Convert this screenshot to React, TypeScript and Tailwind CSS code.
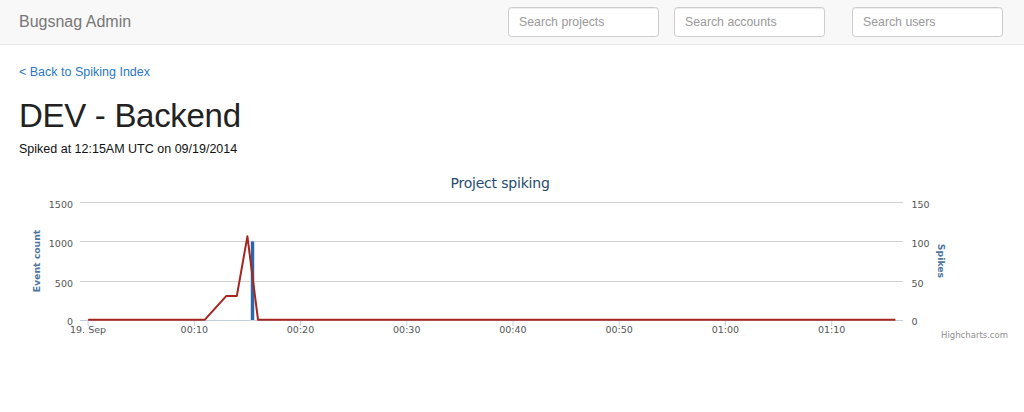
import React from "react";

const chartFont = "'DejaVu Sans', Verdana, sans-serif";

// minutes -> x on the plot
const tx = (t: number) => 194.3 + (t - 10) * 10.623;
// event count -> y on the plot
const vy = (v: number) => 319.7 - v * 0.0787;

const events: [number, number][] = [
  [0, 0],
  [11, 0],
  [12, 150],
  [13, 300],
  [14, 300],
  [15, 1060],
  [16, 0],
  [76, 0],
];

const gridRows = [
  { y: 202.5, left: "1500", right: "150" },
  { y: 241.5, left: "1000", right: "100" },
  { y: 281.5, left: "500", right: "50" },
];

const xTicks = [
  { t: 0, label: "19. Sep" },
  { t: 10, label: "00:10" },
  { t: 20, label: "00:20" },
  { t: 30, label: "00:30" },
  { t: 40, label: "00:40" },
  { t: 50, label: "00:50" },
  { t: 60, label: "01:00" },
  { t: 70, label: "01:10" },
];

function SpikeChart() {
  const points = events.map(([t, v]) => `${tx(t).toFixed(1)},${vy(v).toFixed(1)}`).join(" ");

  return (
    <svg width="1024" height="185" viewBox="0 165 1024 185" className="block" style={{ fontFamily: chartFont }}>
      <text x="500" y="188" textAnchor="middle" fontSize="14" letterSpacing="-0.2" fill="#274b6d">
        Project spiking
      </text>

      {gridRows.map((row) => (
        <g key={row.left}>
          <line x1="80" x2="903" y1={row.y} y2={row.y} stroke="#d0d0d0" strokeWidth="1" />
          <text x="73" y={row.y + 5} textAnchor="end" fontSize="9.5" fill="#555">
            {row.left}
          </text>
          <text x="911.5" y={row.y + 5} fontSize="9.5" fill="#555">
            {row.right}
          </text>
        </g>
      ))}
      <text x="73" y="324.5" textAnchor="end" fontSize="9.5" fill="#555">
        0
      </text>
      <text x="911.5" y="324.5" fontSize="9.5" fill="#555">
        0
      </text>

      {/* x axis */}
      <line x1="80" x2="903" y1="320.5" y2="320.5" stroke="#c0d0e0" strokeWidth="1" />
      {xTicks.map((tick) => (
        <g key={tick.label}>
          <line x1={tx(tick.t)} x2={tx(tick.t)} y1="321" y2="326" stroke="#c0d0e0" strokeWidth="1" />
          <text x={tx(tick.t)} y="332.5" textAnchor="middle" fontSize="9.5" fill="#555">
            {tick.label}
          </text>
        </g>
      ))}

      {/* axis titles */}
      <text
        x="40"
        y="261"
        transform="rotate(-90 40 261)"
        textAnchor="middle"
        fontSize="9.3"
        fontWeight="bold"
        fill="#4d759e"
      >
        Event count
      </text>
      <text
        x="937.5"
        y="261"
        transform="rotate(90 937.5 261)"
        textAnchor="middle"
        fontSize="9.3"
        fontWeight="bold"
        fill="#4d759e"
      >
        Spikes
      </text>

      {/* spikes column */}
      <rect x="250.5" y="241" width="4" height="79.5" fill="#2c66ad" stroke="#dce6f2" strokeWidth="0.8" />

      {/* event count line */}
      <polyline points={points} fill="none" stroke="#a6261f" strokeWidth="2" strokeLinejoin="round" />

      <text x="1008" y="338" textAnchor="end" fontSize="8.5" fill="#909090">
        Highcharts.com
      </text>
    </svg>
  );
}

function SearchBox({ placeholder }: { placeholder: string }) {
  return (
    <input
      type="text"
      placeholder={placeholder}
      className="h-[30px] w-[151px] rounded-[3.5px] border border-[#cccccc] bg-white px-[10px] text-[12.3px] text-[#555] shadow-[inset_0_1px_1px_rgba(0,0,0,0.075)] outline-none placeholder:text-[#999]"
    />
  );
}

export default function App() {
  return (
    <div className="min-h-[412px] bg-white font-['Liberation_Sans',Arial,sans-serif] text-[#222]">
      <nav className="flex h-[45px] items-center border-b border-[#e7e7e7] bg-[#f8f8f8] pr-[21px] pl-[19px]">
        <span className="text-[16px] leading-[20px] text-[#777]">Bugsnag Admin</span>
        <div className="ml-auto flex items-center">
          <div className="flex gap-[15px]">
            <SearchBox placeholder="Search projects" />
            <SearchBox placeholder="Search accounts" />
          </div>
          <div className="ml-[27px]">
            <SearchBox placeholder="Search users" />
          </div>
        </div>
      </nav>

      <main>
        <div className="px-[19px] pt-[18px]">
          <a href="#" className="block text-[12.5px] leading-[18px] text-[#2b78c5]">
            &lt; Back to Spiking Index
          </a>
          <h1 className="mt-[17px] text-[33px] leading-[36px] tracking-[-0.3px] text-[#222]">DEV - Backend</h1>
          <p className="mt-[6px] text-[12.5px] leading-[18px] text-[#111]">Spiked at 12:15AM UTC on 09/19/2014</p>
        </div>
        <div className="mt-[7px]">
          <SpikeChart />
        </div>
      </main>
    </div>
  );
}
